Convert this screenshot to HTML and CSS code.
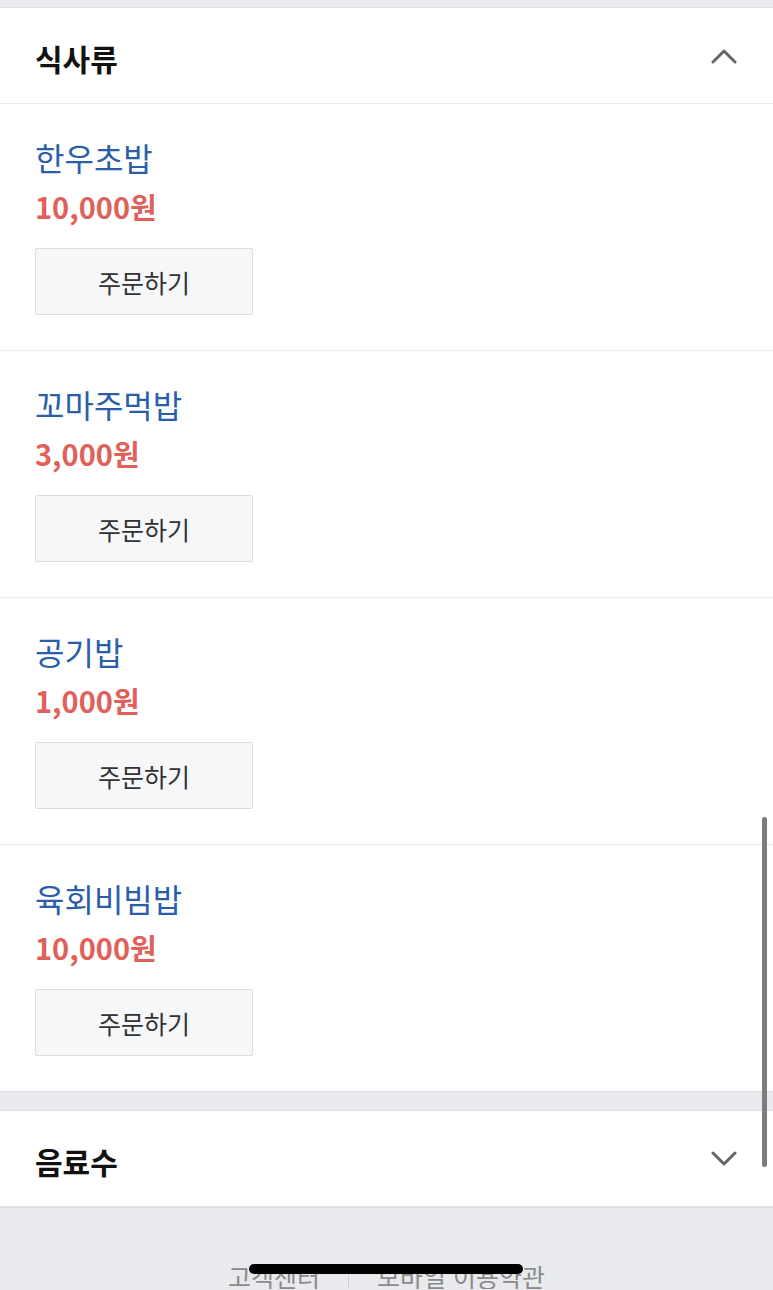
FILE: index.html
```html
<!DOCTYPE html>
<html lang="ko">
<head>
    <meta charset="UTF-8">
    <meta name="viewport" content="width=device-width, initial-scale=1.0">
    <title>메뉴</title>
    <link rel="stylesheet" href="styles.css">
</head>
<body>
    <div class="top-gap"></div>

    <!-- 식사류 -->
    <section class="category">
        <div class="category-head">
            <h2>식사류</h2>
            <svg class="chevron" width="26" height="16" viewBox="0 0 26 16">
                <path d="M2 14 L13 3 L24 14" fill="none" stroke="#666" stroke-width="3" stroke-linecap="round" stroke-linejoin="round"/>
            </svg>
        </div>
        <div class="menu-item">
            <div class="menu-name">한우초밥</div>
            <div class="menu-price">10,000원</div>
            <button class="order-btn">주문하기</button>
        </div>
        <div class="menu-item">
            <div class="menu-name">꼬마주먹밥</div>
            <div class="menu-price">3,000원</div>
            <button class="order-btn">주문하기</button>
        </div>
        <div class="menu-item">
            <div class="menu-name">공기밥</div>
            <div class="menu-price">1,000원</div>
            <button class="order-btn">주문하기</button>
        </div>
        <div class="menu-item">
            <div class="menu-name">육회비빔밥</div>
            <div class="menu-price">10,000원</div>
            <button class="order-btn">주문하기</button>
        </div>
    </section>

    <!-- 음료수 -->
    <section class="category">
        <div class="category-head closed">
            <h2>음료수</h2>
            <svg class="chevron" width="26" height="16" viewBox="0 0 26 16">
                <path d="M2 2 L13 13 L24 2" fill="none" stroke="#666" stroke-width="3" stroke-linecap="round" stroke-linejoin="round"/>
            </svg>
        </div>
    </section>

    <footer class="footer">
        <a href="#">고객센터</a>
        <span class="sep"></span>
        <a href="#">모바일 이용약관</a>
    </footer>

    <div class="scrollbar"></div>
    <div class="home-bar"></div>
</body>
</html>
```

FILE: styles.css
```css
html, body {
    margin: 0;
    padding: 0;
}
body {
    font-family: "Noto Sans CJK KR", "Noto Sans", sans-serif;
    background-color: #e9eaee;
    color: #111;
    height: 1290px;
    overflow: hidden;
}
.top-gap {
    height: 7px;
}
.category {
    background: white;
    border-top: 1px solid #dfe0e4;
    border-bottom: 1px solid #dfe0e4;
    margin-bottom: 18px;
}
.category:last-of-type {
    margin-bottom: 0;
}
.category-head {
    display: flex;
    align-items: center;
    justify-content: space-between;
    height: 95px;
    padding: 0 36px 0 35px;
    border-bottom: 1px solid #ebecef;
}
.category-head.closed {
    border-bottom: none;
}
.category-head h2 {
    margin: 0;
    font-size: 30px;
    font-weight: 700;
    padding-top: 4px;
}
.menu-item {
    padding: 28px 35px 35px;
    border-bottom: 1px solid #ebecef;
}
.menu-item:last-child {
    border-bottom: none;
}
.menu-name {
    color: #2a5ea8;
    font-size: 32px;
    line-height: 50px;
}
.menu-price {
    color: #e0615a;
    font-size: 29px;
    font-weight: 700;
    line-height: 48px;
}
.order-btn {
    display: block;
    margin-top: 18px;
    width: 218px;
    height: 67px;
    background-color: #f6f7f9;
    border: 1px solid #dcdde0;
    border-radius: 2px;
    font-family: inherit;
    font-size: 25px;
    color: #333;
    padding: 0;
}
.footer {
    height: 82px;
    overflow: hidden;
    display: flex;
    justify-content: center;
    align-items: flex-start;
    gap: 28px;
    padding-top: 50px;
    box-sizing: border-box;
    border-top: 1px solid #dfe0e4;
}
.footer a {
    color: #8a8a8a;
    text-decoration: none;
    font-size: 25px;
    line-height: 36px;
}
.sep {
    width: 1px;
    height: 28px;
    margin-top: 5px;
    background-color: #cfd0d3;
}
.scrollbar {
    position: fixed;
    top: 817px;
    right: 6px;
    width: 5px;
    height: 350px;
    border-radius: 3px;
    background-color: #7d7d7d;
}
.home-bar {
    position: fixed;
    left: 249px;
    bottom: 16px;
    width: 274px;
    height: 10px;
    border-radius: 5px;
    background-color: #000;
}
```
